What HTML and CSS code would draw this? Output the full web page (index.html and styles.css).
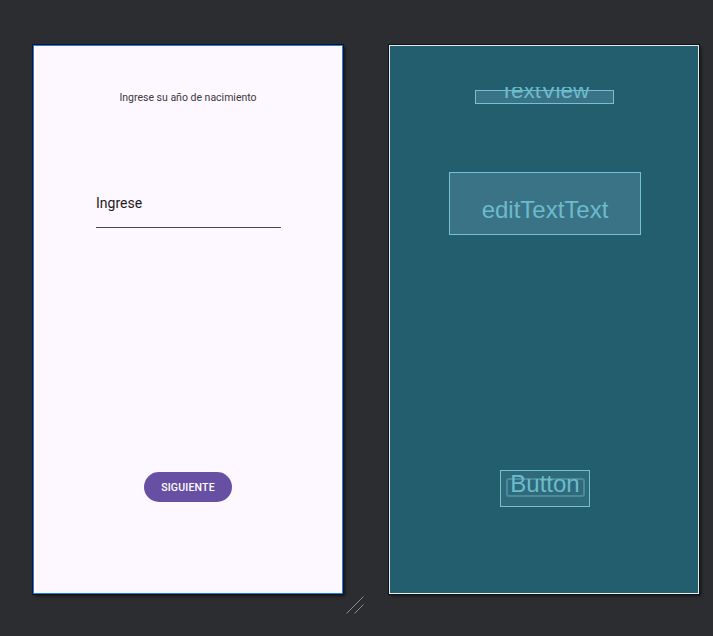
FILE: index.html
```html
<!DOCTYPE html>
<html>
<head>
<meta charset="utf-8">
<link rel="stylesheet" href="styles.css">
</head>
<body>
<div class="stage">
  <div class="phone design">
    <div class="title">Ingrese su año de nacimiento</div>
    <div class="field">Ingrese</div>
    <button class="btn">SIGUIENTE</button>
  </div>
  <div class="phone blueprint">
    <div class="bp-clip">
      <div class="bp-box bp-text"></div>
      <span class="bp-text-label">TextView</span>
    </div>
    <div class="bp-box bp-edit">editTextText</div>
    <div class="bp-box bp-button"><span class="bp-inner">Button</span></div>
  </div>
</div>
<svg class="resize" width="20" height="20" viewBox="0 0 20 20">
  <line x1="0.5" y1="17.5" x2="17.5" y2="0.5" stroke="#8a8c90" stroke-width="1"/>
  <line x1="8.5" y1="17.5" x2="17.5" y2="8.5" stroke="#8a8c90" stroke-width="1"/>
</svg>
</body>
</html>
```
FILE: styles.css
```css
html, body {
  margin: 0;
  padding: 0;
}
body {
  width: 713px;
  height: 636px;
  background: #2b2d30;
  position: relative;
  overflow: hidden;
  font-family: Roboto, "Noto Sans", sans-serif;
}
.stage {
  display: flex;
  gap: 46px;
  padding: 45px 0 0 33px;
}
.phone {
  box-sizing: border-box;
  height: 549px;
  box-shadow: 0 0 0 1px #111214, 2px 2px 3px rgba(0, 0, 0, 0.6);
}
.design {
  width: 310px;
  background: #fdf7ff;
  border: 1px solid #1a7ff0;
  display: flex;
  flex-direction: column;
  align-items: center;
}
.title {
  margin-top: 45px;
  font-size: 10.5px;
  line-height: 14px;
  color: #3c3a40;
}
.field {
  align-self: flex-start;
  margin: 89px 0 0 62px;
  width: 185px;
  font-size: 14px;
  line-height: 18px;
  color: #1d1b20;
  padding-bottom: 15px;
  border-bottom: 1px solid #49454f;
}
.btn {
  margin-top: 244px;
  width: 88px;
  height: 30px;
  border: none;
  border-radius: 15px;
  background: #6750a4;
  color: #ffffff;
  font-family: Roboto, sans-serif;
  font-weight: 500;
  font-size: 10.5px;
  letter-spacing: 0.2px;
  padding: 0;
}
.blueprint {
  width: 310px;
  background: #235e6f;
  border: 1px solid #e8eaec;
  position: relative;
  font-family: "Liberation Sans", Arial, sans-serif;
  color: #6cbbcd;
}
.bp-box {
  position: absolute;
  box-sizing: border-box;
  border: 1px solid #72c2d4;
  background: #3a7385;
  display: flex;
  justify-content: center;
  align-items: center;
}
.bp-clip {
  position: absolute;
  left: 85px;
  top: 41px;
  width: 139px;
  height: 17px;
  overflow: hidden;
}
.bp-text {
  left: 0;
  top: 3px;
  width: 139px;
  height: 14px;
}
.bp-text-label {
  position: absolute;
  left: 0;
  right: 0;
  top: -7px;
  text-align: center;
  font-size: 22.5px;
  line-height: 22px;
}
.bp-edit {
  left: 59px;
  top: 126px;
  width: 192px;
  height: 63px;
  font-size: 24px;
  padding-top: 12px;
}
.bp-button {
  left: 110px;
  top: 424px;
  width: 90px;
  height: 37px;
  background: #2f6a7b;
  font-size: 24px;
  align-items: flex-start;
}
.bp-inner {
  box-sizing: border-box;
  border: 2px solid #4a8b9b;
  border-radius: 3px;
  width: 79px;
  height: 19px;
  margin-top: 7px;
  line-height: 8px;
  display: flex;
  justify-content: center;
}
.resize {
  position: absolute;
  left: 346px;
  top: 596px;
}
```
